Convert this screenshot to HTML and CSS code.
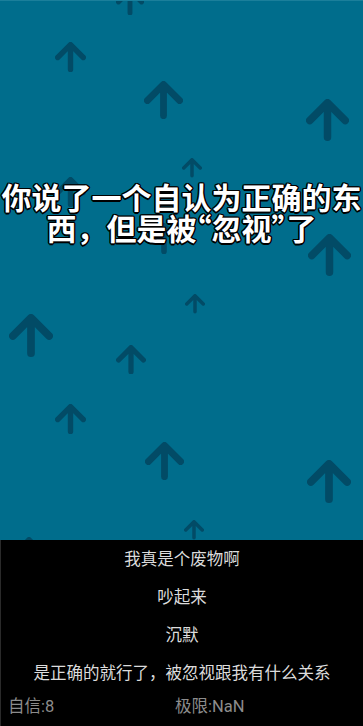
FILE: index.html
```html
<!DOCTYPE html>
<html lang="zh-CN">
<head>
<meta charset="utf-8">
<title>忽视</title>
<link rel="stylesheet" href="styles.css">
</head>
<body>
<div class="screen">
  <div class="stage">
    <div class="arrows">
      <svg class="arrow" style="left:116px;top:-13px;width:28px" viewBox="1.1 1.6 21.8 21.3"><path d="M12 21V4M3 12.5l9-9 9 9"/></svg>
      <svg class="arrow" style="left:55px;top:41px;width:31px" viewBox="1.1 1.6 21.8 21.3"><path d="M12 21V4M3 12.5l9-9 9 9"/></svg>
      <svg class="arrow" style="left:144px;top:80px;width:39px" viewBox="1.1 1.6 21.8 21.3"><path d="M12 21V4M3 12.5l9-9 9 9"/></svg>
      <svg class="arrow" style="left:306px;top:98px;width:43px" viewBox="1.1 1.6 21.8 21.3"><path d="M12 21V4M3 12.5l9-9 9 9"/></svg>
      <svg class="arrow" style="left:182px;top:157px;width:20px" viewBox="1.1 1.6 21.8 21.3"><path d="M12 21V4M3 12.5l9-9 9 9"/></svg>
      <svg class="arrow" style="left:55px;top:176px;width:31px" viewBox="1.1 1.6 21.8 21.3"><path d="M12 21V4M3 12.5l9-9 9 9"/></svg>
      <svg class="arrow" style="left:148px;top:222px;width:32px" viewBox="1.1 1.6 21.8 21.3"><path d="M12 21V4M3 12.5l9-9 9 9"/></svg>
      <svg class="arrow" style="left:308px;top:233px;width:43px" viewBox="1.1 1.6 21.8 21.3"><path d="M12 21V4M3 12.5l9-9 9 9"/></svg>
      <svg class="arrow" style="left:185px;top:293px;width:20px" viewBox="1.1 1.6 21.8 21.3"><path d="M12 21V4M3 12.5l9-9 9 9"/></svg>
      <svg class="arrow" style="left:9px;top:313px;width:44px" viewBox="1.1 1.6 21.8 21.3"><path d="M12 21V4M3 12.5l9-9 9 9"/></svg>
      <svg class="arrow" style="left:116px;top:344px;width:30px" viewBox="1.1 1.6 21.8 21.3"><path d="M12 21V4M3 12.5l9-9 9 9"/></svg>
      <svg class="arrow" style="left:55px;top:403px;width:31px" viewBox="1.1 1.6 21.8 21.3"><path d="M12 21V4M3 12.5l9-9 9 9"/></svg>
      <svg class="arrow" style="left:145px;top:441px;width:39px" viewBox="1.1 1.6 21.8 21.3"><path d="M12 21V4M3 12.5l9-9 9 9"/></svg>
      <svg class="arrow" style="left:307px;top:459px;width:44px" viewBox="1.1 1.6 21.8 21.3"><path d="M12 21V4M3 12.5l9-9 9 9"/></svg>
      <svg class="arrow" style="left:184px;top:519px;width:20px" viewBox="1.1 1.6 21.8 21.3"><path d="M12 21V4M3 12.5l9-9 9 9"/></svg>
      <svg class="arrow" style="left:14px;top:536px;width:30px" viewBox="1.1 1.6 21.8 21.3"><path d="M12 21V4M3 12.5l9-9 9 9"/></svg>
    </div>
    <h1 class="title">你说了一个自认为正确的东西，但是被<span class="q">“忽视”</span>了</h1>
  </div>
  <div class="panel">
    <ul class="options">
      <li class="option">我真是个废物啊</li>
      <li class="option">吵起来</li>
      <li class="option">沉默</li>
      <li class="option">是正确的就行了，被忽视跟我有什么关系</li>
    </ul>
    <div class="status">
      <span class="stat">自信:8</span>
      <span class="stat">极限:NaN</span>
    </div>
  </div>
</div>
</body>
</html>
```

FILE: styles.css
```css
html, body {
  margin: 0;
  padding: 0;
  background: #000;
}

.screen {
  width: 363px;
  height: 726px;
  display: flex;
  flex-direction: column;
  overflow: hidden;
  font-family: "Noto Sans CJK SC", "Noto Sans", sans-serif;
}

.stage {
  position: relative;
  height: 540px;
  flex: none;
  background: #006d8c;
  overflow: hidden;
  border-top: 1px solid #1b7f9b;
  box-sizing: border-box;
}

.arrows {
  position: absolute;
  inset: 0;
}

.arrow {
  position: absolute;
  height: auto;
  aspect-ratio: 21.8 / 21.3;
  fill: none;
  stroke: #024b66;
  stroke-width: 3.8;
  stroke-linecap: round;
  stroke-linejoin: round;
}

.title {
  position: relative;
  margin: 0;
  padding-top: 180px;
  font-size: 30px;
  line-height: 31px;
  font-weight: 700;
  color: #fff;
  text-align: center;
  text-shadow:
    1.5px 0 0 #000, -1.5px 0 0 #000, 0 1.5px 0 #000, 0 -1.5px 0 #000,
    1.1px 1.1px 0 #000, -1.1px 1.1px 0 #000, 1.1px -1.1px 0 #000, -1.1px -1.1px 0 #000;
}

.q {
  font-feature-settings: "halt" 1;
}

.panel {
  flex: 1;
  background: #000;
  border-left: 1px solid #2a2a2a;
  display: flex;
  flex-direction: column;
  padding-top: 1px;
  font-family: Roboto, "Noto Sans CJK SC", sans-serif;
}

.options {
  list-style: none;
  margin: 0;
  padding: 0;
  display: flex;
  flex-direction: column;
}

.option {
  height: 38px;
  line-height: 38px;
  text-align: center;
  font-size: 16.5px;
  color: #dcdcdc;
  white-space: nowrap;
}

.status {
  display: grid;
  grid-template-columns: 167px 1fr;
  padding-left: 7px;
  height: 28px;
  line-height: 28px;
  font-size: 16.5px;
  color: #8c8c8c;
}
```
